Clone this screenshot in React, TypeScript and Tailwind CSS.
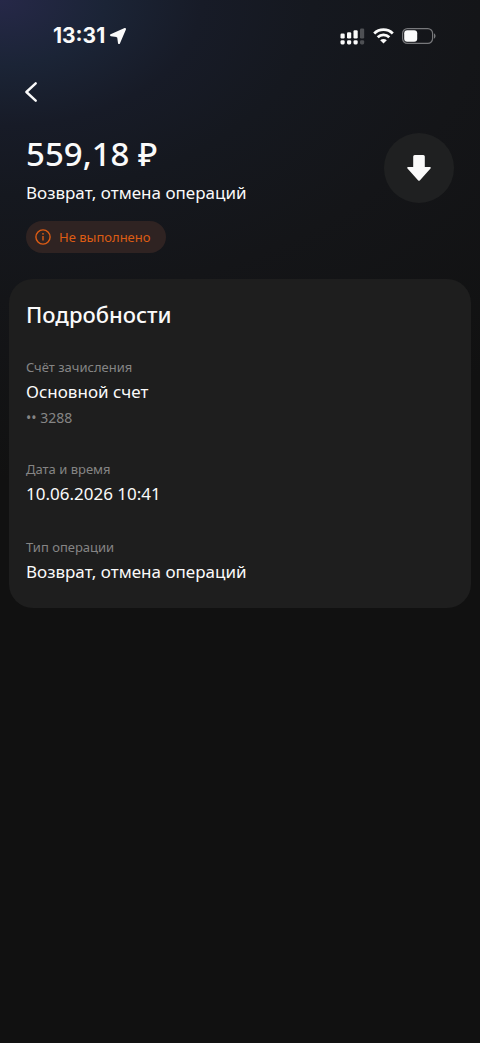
import React from 'react';

interface DetailItem {
  label: string;
  value: string;
  note?: string;
}

const details: DetailItem[] = [
  { label: 'Счёт зачисления', value: 'Основной счет', note: '•• 3288' },
  { label: 'Дата и время', value: '10.06.2026 10:41' },
  { label: 'Тип операции', value: 'Возврат, отмена операций' },
];

const StatusBar: React.FC = () => (
  <div className="flex items-center justify-between h-18 pl-[53px] pr-[44px]">
    <div className="flex items-center gap-1">
      <span className="font-['Inter',sans-serif] text-[21px] leading-6 font-bold">13:31</span>
      <svg width="18" height="18" viewBox="0 0 18 18" fill="currentColor" stroke="currentColor" strokeWidth="2" strokeLinejoin="round" aria-hidden="true">
        <path d="M16 2 10 16 9.200 10.200 7.700 8.900 2 8.200z" />
      </svg>
    </div>

    <div className="flex items-center gap-2">
      {/* Dual SIM signal */}
      <svg width="25" height="17" viewBox="0 0 25 17" fill="currentColor" aria-hidden="true">
        <rect x="0.5" y="5.5" width="4.2" height="5" rx="1.2" />
        <rect x="7" y="4.2" width="4.2" height="6.3" rx="1.2" />
        <rect x="13.5" y="2.2" width="4.2" height="8.3" rx="1.2" />
        <rect x="20" y="0.5" width="4.2" height="10" rx="1.2" opacity="0.25" />
        <rect x="0.5" y="12.2" width="4.2" height="4.3" rx="1.4" />
        <rect x="7" y="12.2" width="4.2" height="4.3" rx="1.4" />
        <rect x="13.5" y="12.2" width="4.2" height="4.3" rx="1.4" />
        <rect x="20" y="12.2" width="4.2" height="4.3" rx="1.4" opacity="0.25" />
      </svg>
      <svg width="21" height="16" viewBox="0 0 21 16" fill="none" stroke="currentColor" strokeWidth="2.8" aria-hidden="true">
        <path d="M1.200 5.500a13.300 13.300 0 0 1 18.600 0" />
        <path d="M4.700 9.200a8.300 8.300 0 0 1 11.600 0" />
        <path d="M10.500 15.600 7.200 12.300a4.700 4.700 0 0 1 6.600 0z" fill="currentColor" stroke="none" />
      </svg>
      <svg width="34" height="16" viewBox="0 0 34 16" aria-hidden="true">
        <rect x="0.6" y="0.6" width="30" height="14.8" rx="4.8" fill="none" stroke="#77787b" strokeWidth="1.2" />
        <rect x="2.2" y="2.2" width="13" height="11.6" rx="3" fill="currentColor" />
        <path d="M32 5.500c2 .6 2 4.400 0 5z" fill="#77787b" />
      </svg>
    </div>
  </div>
);

const Badge: React.FC<{ children: React.ReactNode }> = ({ children }) => (
  <div className="flex items-center gap-2 w-fit h-8 pl-[9px] pr-4 rounded-full bg-[#2f2322] text-[#dd5c14]">
    <svg width="16" height="16" viewBox="0 0 16 16" fill="none" stroke="currentColor" strokeWidth="1.4" aria-hidden="true">
      <circle cx="8" cy="8" r="7.1" />
      <path d="M8 7v4.500" />
      <circle cx="8" cy="4.8" r="0.9" fill="currentColor" stroke="none" />
    </svg>
    <span className="text-[13px] leading-5">{children}</span>
  </div>
);

export default function App() {
  return (
    <div className="min-h-screen bg-[#111111] bg-[radial-gradient(ellipse_480px_300px_at_0_0,#262848_0%,#1b2436_22%,#171b27_42%,#15181f_65%,#141518_100%,#111111_160%)] text-[#fafafa] font-['Noto_Sans',sans-serif]">
      <StatusBar />

      <nav className="flex items-center h-10 px-[19px]">
        <button type="button" aria-label="Назад" className="flex items-center justify-center size-6 cursor-pointer">
          <svg width="12" height="20" viewBox="0 0 12 20" fill="none" stroke="currentColor" strokeWidth="2.4" strokeLinecap="round" strokeLinejoin="round" aria-hidden="true">
            <path d="M10.700 1.300 1.400 10l9.300 8.700" />
          </svg>
        </button>
      </nav>

      <main>
        <header className="flex items-start justify-between pt-[21px] px-[26px]">
          <div>
            <h1 className="text-[33px] leading-[42px] font-medium">559,18 ₽</h1>
            <p className="mt-1.5 text-[17px] leading-6">Возврат, отмена операций</p>
            <div className="mt-4">
              <Badge>Не выполнено</Badge>
            </div>
          </div>
          <button type="button" aria-label="Скачать" className="flex items-center justify-center size-[70px] rounded-full bg-[#1f2021] cursor-pointer">
            <svg width="24" height="28" viewBox="0 0 24 28" fill="currentColor" aria-hidden="true">
              <path d="M7.700 1h8.600a1.500 1.500 0 0 1 1.500 1.500V13h5c.9 0 1.300 1 .7 1.600L13 26.200a1.400 1.400 0 0 1-2 0L.5 14.600C-.1 14 .3 13 1.200 13h5V2.500A1.500 1.500 0 0 1 7.700 1z" />
            </svg>
          </button>
        </header>

        <section className="mt-[26px] mx-[9px] px-[17px] pt-[19px] pb-[22px] rounded-3xl bg-[#1e1e1e]">
          <h2 className="text-[22px] leading-8 font-medium">Подробности</h2>
          <dl className="flex flex-col gap-7 mt-[26px]">
            {details.map((item) => (
              <div key={item.label}>
                <dt className="text-[13px] leading-[22px] text-[#858585]">{item.label}</dt>
                <dd className="text-[17px] leading-7">{item.value}</dd>
                {item.note && <dd className="text-sm leading-6 text-[#858585]">{item.note}</dd>}
              </div>
            ))}
          </dl>
        </section>
      </main>
    </div>
  );
}
